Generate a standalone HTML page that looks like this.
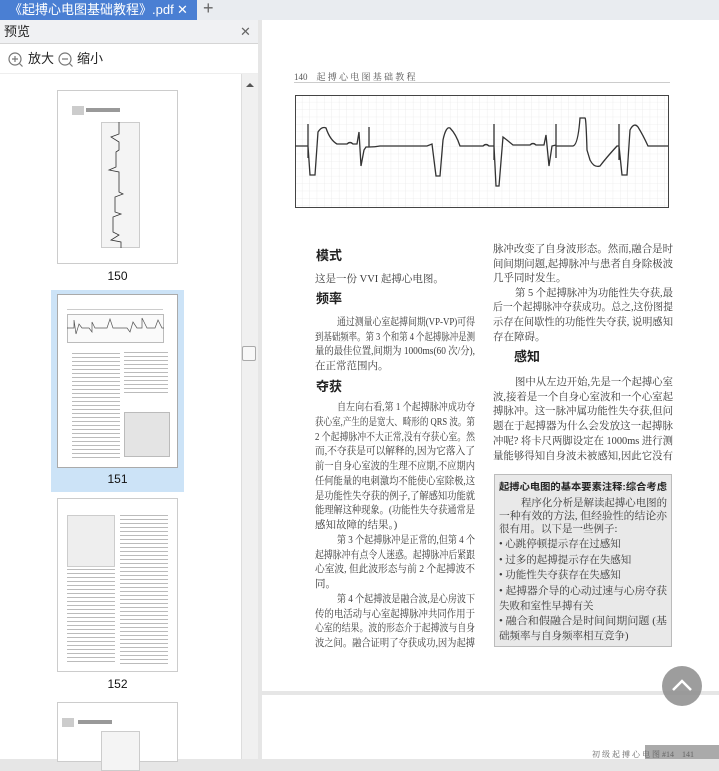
<!DOCTYPE html>
<html><head><meta charset="utf-8"><style>
*{margin:0;padding:0;box-sizing:border-box}
body{width:719px;height:759px;overflow:hidden;position:relative;background:#e6e6e6;font-family:"Liberation Sans","Noto Sans CJK SC",sans-serif}
.a{position:absolute}
.tx{position:absolute;font-family:"Liberation Serif","Noto Serif CJK SC",serif;font-size:10px;color:#3a3a3a;white-space:nowrap;line-height:14px}
.h{position:absolute;font-family:"Liberation Sans","Noto Sans CJK SC",sans-serif;font-size:13px;font-weight:bold;color:#222;line-height:16px}
svg text{font-family:"Liberation Serif","Noto Serif CJK SC",serif;font-size:10.5px;fill:#3a3a3a}
svg text.b{font-family:"Liberation Sans","Noto Sans CJK SC",sans-serif;font-weight:bold;fill:#222;font-size:9.5px}
</style></head><body>
<div class="a" style="left:0;top:0;width:719px;height:20px;background:#e9ecf0"></div>
<div class="a" style="left:0;top:0;width:197px;height:20px;background:#4a7fd3;color:#fff;font-size:13px;line-height:19px;padding-left:9px">《起搏心电图基础教程》.pdf<span style="position:absolute;left:177px;top:0;font-size:13px">✕</span></div>
<div class="a" style="left:203px;top:-2px;color:#666;font-size:18px">+</div>
<div class="a" style="left:0;top:20px;width:258px;height:739px;background:#fff"></div>
<div class="a" style="left:0;top:20px;width:258px;height:24px;background:#f0f1f3;border-bottom:1px solid #d5d5d5;font-size:13px;line-height:23px;padding-left:4px;color:#222">预览<span style="position:absolute;left:240px;top:0;color:#666">✕</span></div>
<div class="a" style="left:0;top:44px;width:258px;height:30px;border-bottom:1px solid #eee;font-size:13px;line-height:30px;color:#222">
<svg class="a" style="left:8px;top:8px" width="15" height="15"><circle cx="7" cy="7" r="6" fill="none" stroke="#777" stroke-width="1.2"/><path d="M4 7h6M7 4v6M11.5 11.5l3 3" stroke="#777" stroke-width="1.2"/></svg>
<span class="a" style="left:28px;top:0">放大</span>
<svg class="a" style="left:58px;top:8px" width="15" height="15"><circle cx="7" cy="7" r="6" fill="none" stroke="#777" stroke-width="1.2"/><path d="M4 7h6M11.5 11.5l3 3" stroke="#777" stroke-width="1.2"/></svg>
<span class="a" style="left:77px;top:0">缩小</span></div>
<div class="a" style="left:241px;top:74px;width:17px;height:685px;background:#f0f0f0;border-left:1px solid #ddd"></div>
<div class="a" style="left:246px;top:83px;width:0;height:0;border-left:4px solid transparent;border-right:4px solid transparent;border-bottom:4px solid #555"></div>
<div class="a" style="left:242px;top:346px;width:14px;height:15px;background:#f8f8f8;border:1px solid #aaa;border-radius:2px"></div>
<div class="a" style="left:57px;top:90px;width:121px;height:174px;border:1px solid #ccc;background:#fff">
 <div class="a" style="left:14px;top:15px;width:12px;height:9px;background:#ccc"></div>
 <div class="a" style="left:28px;top:17px;width:34px;height:4px;background:#999"></div>
 <div class="a" style="left:43px;top:31px;width:39px;height:126px;background:#f4f4f4;border:1px solid #ccc"></div>
 <svg class="a" style="left:43px;top:31px" width="39" height="126"><path d="M18 0V12L10 15L18 20V28L15 30V45L8 48L18 50V70L22 72L14 75V90L20 92L12 95V110L18 113L10 118L20 120V126" fill="none" stroke="#333" stroke-width="0.8"/></svg>
</div>
<div class="a" style="left:0;top:269px;width:235px;text-align:center;font-size:12px;color:#111">150</div>
<div class="a" style="left:51px;top:290px;width:133px;height:202px;background:#cce3f7"></div>
<div class="a" style="left:57px;top:294px;width:121px;height:174px;border:1px solid #aaa;background:#fff">
 <div class="a" style="left:9px;top:14px;width:96px;height:1px;background:#ccc"></div>
 <div class="a" style="left:9px;top:19px;width:97px;height:29px;border:1px solid #bbb;background:#fafafa"></div>
 <svg class="a" style="left:9px;top:19px" width="97" height="29"><path d="M0 14H7V6L9 20L12 10L15 14H22L25 18V8L28 14H40L43 5L46 14H60L63 18L66 8L70 14H75V4L80 14H88L91 6L95 14H97" fill="none" stroke="#555" stroke-width="0.7"/></svg>
 <div class="a" style="left:14px;top:58px;width:48px;height:108px;background:repeating-linear-gradient(#bbb 0 1px,transparent 1px 4px)"></div>
 <div class="a" style="left:66px;top:57px;width:44px;height:44px;background:repeating-linear-gradient(#bbb 0 1px,transparent 1px 4px)"></div>
 <div class="a" style="left:66px;top:117px;width:46px;height:45px;background:#e4e4e4;border:1px solid #bbb"></div>
</div>
<div class="a" style="left:0;top:472px;width:235px;text-align:center;font-size:12px;color:#111">151</div>
<div class="a" style="left:57px;top:498px;width:121px;height:174px;border:1px solid #ccc;background:#fff">
 <div class="a" style="left:9px;top:16px;width:48px;height:52px;background:#eee;border:1px solid #ccc"></div>
 <div class="a" style="left:9px;top:70px;width:48px;height:95px;background:repeating-linear-gradient(#bbb 0 1px,transparent 1px 4px)"></div>
 <div class="a" style="left:62px;top:16px;width:48px;height:150px;background:repeating-linear-gradient(#bbb 0 1px,transparent 1px 4px)"></div>
</div>
<div class="a" style="left:0;top:677px;width:235px;text-align:center;font-size:12px;color:#111">152</div>
<div class="a" style="left:57px;top:702px;width:121px;height:60px;border:1px solid #ccc;background:#fff">
 <div class="a" style="left:4px;top:15px;width:12px;height:9px;background:#ccc"></div>
 <div class="a" style="left:20px;top:17px;width:34px;height:4px;background:#999"></div>
 <div class="a" style="left:43px;top:28px;width:39px;height:40px;background:#f4f4f4;border:1px solid #ccc"></div>
</div>
<div class="a" style="left:262px;top:20px;width:457px;height:671px;background:#fff"></div>
<div class="a" style="left:262px;top:695px;width:457px;height:64px;background:#fff"></div>
<div class="tx" style="left:294px;top:70px;font-size:9px;color:#555">140　起 搏 心 电 图 基 础 教 程</div>
<div class="a" style="left:294px;top:82px;width:376px;height:1px;background:#ccc"></div>
<svg class="a" style="left:295px;top:95px" width="375" height="114">
<defs><pattern id="g" width="7.4" height="7.4" patternUnits="userSpaceOnUse"><path d="M7.4 0V7.4H0" fill="none" stroke="#e4e4e4" stroke-width="0.6"/></pattern></defs>
<rect x="0.5" y="0.5" width="373" height="112" fill="url(#g)" stroke="#444"/>
<g transform="translate(-295,-95)" fill="none" stroke="#333" stroke-width="1.3">
<path d="M295 146H308M308 124V158M308 146L310 175H315L318 132Q322 126 326 128Q330 140 337 144H347Q350 141 353 144H357L359 132L361 166L364 150L366 147H369V127M369 147Q375 147 380 146H427L432 144L434 160L436 176H440L443 140Q446 126 450 128Q456 134 460 146H483Q486 143 489 146H494M494 124V160M494 146L496 186H499L503 137Q507 140 513 145H530Q533 142 536 145H544L546 135L549 166L552 146L556 145M556 124V158M556 146L573 146Q578 145 580 118H585Q586 117 587 150L590 160Q594 168 600 166Q606 158 617 146L619 146M619 124V160M619 146L622 175H627L630 130Q634 122 638 127Q643 135 648 146H668"/>
</g></svg>
<div class="h" style="left:316px;top:248px">模式</div>
<div class="h" style="left:316px;top:291px">频率</div>
<div class="h" style="left:316px;top:379px">夺获</div>
<div class="h" style="left:514px;top:349px">感知</div>
<div class="a" style="left:494px;top:474px;width:178px;height:173px;background:#e9e9e9;border:1px solid #bbb"></div>
<svg class="a" style="left:0;top:0" width="719" height="759" lengthAdjust="spacingAndGlyphs">
<text x="315" y="282">这是一份 VVI 起搏心电图。</text>
<text x="337" y="325" textLength="138" lengthAdjust="spacingAndGlyphs">通过测量心室起搏间期(VP-VP)可得</text>
<text x="315" y="340" textLength="160" lengthAdjust="spacingAndGlyphs">到基础频率。第 3 个和第 4 个起搏脉冲是测</text>
<text x="315" y="354" textLength="160" lengthAdjust="spacingAndGlyphs">量的最佳位置,间期为 1000ms(60 次/分),</text>
<text x="315" y="369">在正常范围内。</text>
<text x="337" y="410" textLength="138" lengthAdjust="spacingAndGlyphs">自左向右看,第 1 个起搏脉冲成功夺</text>
<text x="315" y="425" textLength="160" lengthAdjust="spacingAndGlyphs">获心室,产生的是宽大、畸形的 QRS 波。第</text>
<text x="315" y="440" textLength="160" lengthAdjust="spacingAndGlyphs">2 个起搏脉冲不大正常,没有夺获心室。然</text>
<text x="315" y="454" textLength="160" lengthAdjust="spacingAndGlyphs">而,不夺获是可以解释的,因为它落入了</text>
<text x="315" y="469" textLength="160" lengthAdjust="spacingAndGlyphs">前一自身心室波的生理不应期,不应期内</text>
<text x="315" y="484" textLength="160" lengthAdjust="spacingAndGlyphs">任何能量的电刺激均不能使心室除极,这</text>
<text x="315" y="499" textLength="160" lengthAdjust="spacingAndGlyphs">是功能性失夺获的例子,了解感知功能就</text>
<text x="315" y="513" textLength="160" lengthAdjust="spacingAndGlyphs">能理解这种现象。(功能性失夺获通常是</text>
<text x="315" y="528">感知故障的结果。)</text>
<text x="337" y="543" textLength="138" lengthAdjust="spacingAndGlyphs">第 3 个起搏脉冲是正常的,但第 4 个</text>
<text x="315" y="558" textLength="160" lengthAdjust="spacingAndGlyphs">起搏脉冲有点令人迷惑。起搏脉冲后紧跟</text>
<text x="315" y="572" textLength="160" lengthAdjust="spacingAndGlyphs">心室波, 但此波形态与前 2 个起搏波不</text>
<text x="315" y="587">同。</text>
<text x="337" y="602" textLength="138" lengthAdjust="spacingAndGlyphs">第 4 个起搏波是融合波,是心房波下</text>
<text x="315" y="617" textLength="160" lengthAdjust="spacingAndGlyphs">传的电活动与心室起搏脉冲共同作用于</text>
<text x="315" y="631" textLength="160" lengthAdjust="spacingAndGlyphs">心室的结果。波的形态介于起搏波与自身</text>
<text x="315" y="646" textLength="160" lengthAdjust="spacingAndGlyphs">波之间。融合证明了夺获成功,因为起搏</text>
<text x="493" y="252" textLength="180" lengthAdjust="spacingAndGlyphs">脉冲改变了自身波形态。然而,融合是时</text>
<text x="493" y="267" textLength="180" lengthAdjust="spacingAndGlyphs">间间期问题,起搏脉冲与患者自身除极波</text>
<text x="493" y="281">几乎同时发生。</text>
<text x="515" y="296" textLength="158" lengthAdjust="spacingAndGlyphs">第 5 个起搏脉冲为功能性失夺获,最</text>
<text x="493" y="310" textLength="180" lengthAdjust="spacingAndGlyphs">后一个起搏脉冲夺获成功。总之,这份图提</text>
<text x="493" y="325" textLength="180" lengthAdjust="spacingAndGlyphs">示存在间歇性的功能性失夺获, 说明感知</text>
<text x="493" y="340">存在障碍。</text>
<text x="515" y="385" textLength="158" lengthAdjust="spacingAndGlyphs">图中从左边开始,先是一个起搏心室</text>
<text x="493" y="400" textLength="180" lengthAdjust="spacingAndGlyphs">波,接着是一个自身心室波和一个心室起</text>
<text x="493" y="414" textLength="180" lengthAdjust="spacingAndGlyphs">搏脉冲。这一脉冲属功能性失夺获,但问</text>
<text x="493" y="429" textLength="180" lengthAdjust="spacingAndGlyphs">题在于起搏器为什么会发放这一起搏脉</text>
<text x="493" y="444" textLength="180" lengthAdjust="spacingAndGlyphs">冲呢? 将卡尺两脚设定在 1000ms 进行测</text>
<text x="493" y="459" textLength="180" lengthAdjust="spacingAndGlyphs">量能够得知自身波未被感知,因此它没有</text>
<text class="b" x="499" y="490" textLength="168" lengthAdjust="spacingAndGlyphs">起搏心电图的基本要素注释:综合考虑</text>
<text x="521" y="506" textLength="146" lengthAdjust="spacingAndGlyphs">程序化分析是解读起搏心电图的</text>
<text x="499" y="519" textLength="168" lengthAdjust="spacingAndGlyphs">一种有效的方法, 但经验性的结论亦</text>
<text x="499" y="532">很有用。以下是一些例子:</text>
<text x="499" y="547">• 心跳停顿提示存在过感知</text>
<text x="499" y="563">• 过多的起搏提示存在失感知</text>
<text x="499" y="578">• 功能性失夺获存在失感知</text>
<text x="499" y="594" textLength="168" lengthAdjust="spacingAndGlyphs">• 起搏器介导的心动过速与心房夺获</text>
<text x="499" y="609">失败和室性早搏有关</text>
<text x="499" y="624" textLength="168" lengthAdjust="spacingAndGlyphs">• 融合和假融合是时间间期问题 (基</text>
<text x="499" y="639">础频率与自身频率相互竞争)</text>
</svg>
<div class="a" style="left:645px;top:745px;width:74px;height:14px;background:#aaa"></div>
<div class="tx" style="left:592px;top:748px;font-size:8px;color:#666">初 级 起 搏 心 电 图 #14　141</div>
<div class="a" style="left:662px;top:666px;width:40px;height:40px;border-radius:50%;background:rgba(140,140,140,0.85)"></div>
<svg class="a" style="left:662px;top:666px" width="40" height="40"><path d="M11 24L20 15L29 24" fill="none" stroke="#fff" stroke-width="2.5"/></svg>
</body></html>
